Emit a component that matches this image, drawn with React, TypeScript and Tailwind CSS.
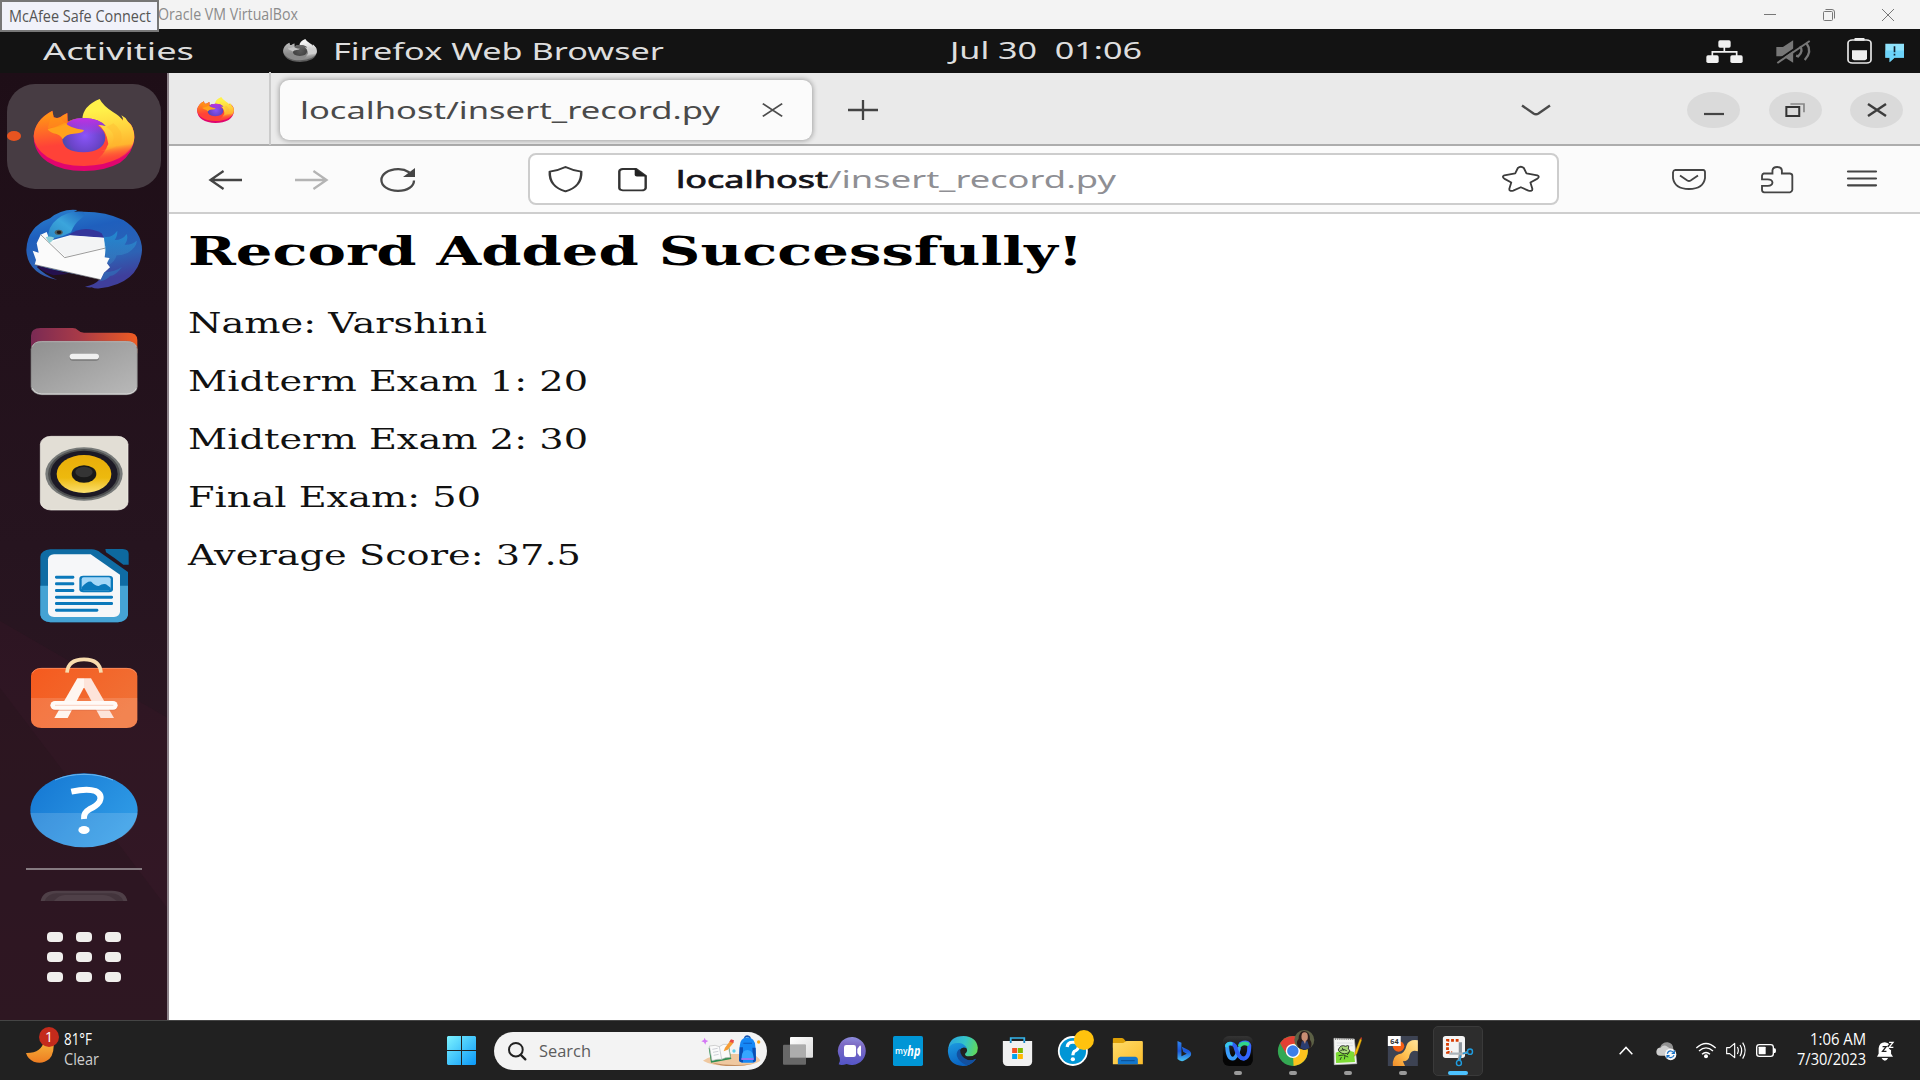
import React, { useLayoutEffect, useRef, useState } from "react";

/** Single line of text stretched horizontally to a fixed width. */
function Fit({ width, className = "", children }: { width: number; className?: string; children: React.ReactNode }) {
  const ref = useRef<HTMLSpanElement>(null);
  const [scale, setScale] = useState(1);
  useLayoutEffect(() => {
    if (ref.current && ref.current.offsetWidth) {
      setScale(width / ref.current.getBoundingClientRect().width);
    }
  }, [width]);
  return (
    <span className={`block shrink-0 whitespace-pre ${className}`} style={{ width }}>
      <span className="inline-block origin-left" ref={ref} style={{ transform: `scaleX(${scale})` }}>
        {children}
      </span>
    </span>
  );
}

function Art({ box, className, children }: { box: string; className: string; children: React.ReactNode }) {
  return (
    <svg viewBox={box} preserveAspectRatio="none" className={`block shrink-0 overflow-visible ${className}`} fill="none">
      {children}
    </svg>
  );
}

function FirefoxArt({ id, mono = false }: { id: string; mono?: boolean }) {
  const c = mono
    ? ["#b8b8b8", "#8a8a8a", "#5c5c5c", "#f4f4f4", "#cfcfcf", "#444444", "#6b6b6b", "#c4c4c4"]
    : ["#ff9416", "#ff4238", "#e0056e", "#fff14a", "#ffb52e", "#4c4bb0", "#b833e1", "#ffa21c"];
  return (
    <g>
      <defs>
        <linearGradient id={`${id}a`} gradientUnits="userSpaceOnUse" x1="215" y1="120" x2="235" y2="303">
          <stop offset="0.05" stopColor={c[0]} />
          <stop offset="0.55" stopColor={c[1]} />
          <stop offset="1" stopColor={c[1]} />
        </linearGradient>
        <linearGradient id={`${id}b`} gradientUnits="userSpaceOnUse" x1="300" y1="90" x2="325" y2="285">
          <stop offset="0.15" stopColor={c[3]} />
          <stop offset="0.5" stopColor={mono ? "#d0d0d0" : "#ffcf3c"} />
          <stop offset="0.72" stopColor={c[4]} />
          <stop offset="0.95" stopColor={c[1]} stopOpacity="0" />
        </linearGradient>
        <radialGradient id={`${id}c`} gradientUnits="userSpaceOnUse" cx="255" cy="196" r="66">
          <stop offset="0" stopColor={mono ? "#5a5a5a" : "#8a55fa"} />
          <stop offset="0.75" stopColor={mono ? "#474747" : "#6a44c8"} />
          <stop offset="1" stopColor={c[5]} />
        </radialGradient>
        <linearGradient id={`${id}d`} x1="0" y1="0" x2="0" y2="1">
          <stop offset="0.05" stopColor={c[6]} />
          <stop offset="0.5" stopColor={c[6]} stopOpacity="0" />
        </linearGradient>
      </defs>
      <path
        d="M157 122 L161 142 Q171 146 180 142 Q189 134 202 129 L203 155 Q225 144 250 145 Q330 140 381 152 Q403 168 403 205 Q400 250 360 278 Q315 303 252 303 Q185 303 142 275 Q102 247 101 200 Q104 150 157 122Z"
        fill={c[2]}
      />
      <path
        d="M157 122 L161 142 Q171 146 180 142 Q189 134 202 129 L203 155 Q225 144 250 145 Q330 140 381 152 Q403 168 403 200 Q400 238 358 264 Q315 287 252 288 Q185 288 142 261 Q102 235 101 198 Q104 150 157 122Z"
        fill={`url(#${id}a)`}
      />
      <path
        d="M247 148 Q248 108 299 87 Q309 107 340 127 Q360 138 369 153 Q369 142 364 136 Q376 141 384 155 Q403 170 403 203 Q401 245 350 272 Q310 288 275 280 Q310 262 325 222 Q320 180 290 160Z"
        fill={`url(#${id}b)`}
      />
      <path d="M318 172 Q352 190 336 222 Q322 240 300 244 Q346 240 364 214 Q372 184 340 160Z" fill={c[4]} opacity="0.35" />
      <path
        d="M201 160 Q218 144 254 144 Q298 146 317 168 Q303 164 292 166 Q316 182 316 203 Q313 245 250 247 Q188 245 187 206 Q190 188 203 180Z"
        fill={`url(#${id}c)`}
      />
      <path
        d="M201 160 Q218 144 254 144 Q298 146 317 168 Q303 164 292 166 Q316 182 316 203 Q313 245 250 247 Q188 245 187 206 Q190 188 203 180Z"
        fill={`url(#${id}d)`}
      />
      <path d="M143 177 Q168 172 196 158 Q206 173 252 180 Q250 190 221 191 Q198 192 188 208 Q181 193 160 190 Q146 184 143 177Z" fill={c[7]} />
      <path d="M157 122 L161 142 Q172 146 182 142 Q184 156 203 160 Q185 172 143 175 Q150 150 157 122Z" fill={c[0]} opacity="0.5" />
    </g>
  );
}

function Dock() {
  return (
    <aside className="relative flex w-[169px] shrink-0 flex-col items-center overflow-hidden border-r-2 border-[#8d838a] bg-linear-to-b from-[#1e0e17] via-[#26141f] to-[#321a26] pt-[24px] pl-px">
      <Art box="0 0 168 947" className="absolute inset-0 h-[947px] w-[168px]">
        <path d="M0 548 L168 645 V947 H0Z" fill="#3a1827" opacity="0.3" />
        <path d="M0 615 L168 836 V947 H0Z" fill="#26141c" opacity="0.35" />
      </Art>
      <div className="absolute top-[10.5px] left-[7px] h-[105.5px] w-[154px] rounded-[28px] bg-[#473c43]" />
      <div className="absolute top-[58px] left-[7px] h-[10px] w-[14px] rounded-[50%] bg-[#e95420]" />
      <div className="relative flex flex-col gap-[32px]">
        <Art box="78 81 348 240" className="h-[80px] w-[116px]">
          <FirefoxArt id="dock" />
        </Art>
        <Art box="78 417 348 240" className="h-[80px] w-[116px]">
          <defs>
            <linearGradient id="tb" x1="0" y1="0" x2="0.3" y2="1">
              <stop offset="0" stopColor="#2b84d0" />
              <stop offset="0.35" stopColor="#1f5fbd" />
              <stop offset="0.75" stopColor="#2d62b4" />
              <stop offset="1" stopColor="#3f3f9c" />
            </linearGradient>
            <linearGradient id="tbh" x1="0" y1="1" x2="1" y2="0">
              <stop offset="0" stopColor="#2c86c4" />
              <stop offset="0.5" stopColor="#3ba5dc" />
              <stop offset="1" stopColor="#1f66c0" />
            </linearGradient>
            <linearGradient id="tbf" x1="0" y1="0" x2="0" y2="1">
              <stop offset="0" stopColor="#1fa5e0" />
              <stop offset="1" stopColor="#3f8fc8" stopOpacity="0.5" />
            </linearGradient>
          </defs>
          <path d="M79 540 Q82 470 150 445 Q185 415 232 420 Q226 424 222 426 Q310 420 370 450 Q426 485 426 540 Q420 640 300 655 Q285 657 275 652 Q265 653 255 650 Q285 645 300 627 L110 590 Q130 612 172 630 Q82 612 79 540Z" fill="url(#tb)" />
          <path d="M108 585 Q125 606 160 616 L205 612Z" fill="#25104e" />
          <path d="M205 496 Q250 462 305 490 L312 504Z" fill="#33359a" />
          <path d="M122 494 L140 486 L150 512 L210 496 L312 503 L317 540 L314 562 L329 564 L321 580 L330 592 L312 608 L302 629 L104 584 L108 570 L98 542 L116 548 L110 520Z" fill="#fbfbfb" />
          <path d="M104 584 L302 629" stroke="#555" strokeWidth="3" opacity="0.6" />
          <path d="M196 560 L152 518 L210 497 L310 504 L316 531Z" fill="#f3f4f5" />
          <path d="M122 494 L194 563 L317 534" stroke="#9b9b9b" strokeWidth="3" />
          <path d="M144 508 Q142 470 172 447 Q205 420 248 425 Q262 432 242 446 Q222 462 213 487 Q190 500 165 504 Q155 508 144 508Z" fill="url(#tbh)" />
          <path d="M137 502 Q146 496 163 503 Q158 514 148 520Z" fill="#8fd0d8" />
          <ellipse cx="176" cy="487" rx="12" ry="8" fill="#4e5f60" />
          <ellipse cx="177" cy="487" rx="7" ry="5" fill="#231d1c" />
          <path d="M312 500 Q335 505 352 482 Q352 500 344 510 Q368 510 380 492 Q386 510 374 524 Q395 526 410 512 Q412 530 384 548 Q366 556 350 556 Q345 574 328 584 L322 575 L330 563 L316 562Z" fill="url(#tbf)" opacity="0.6" />
          <path d="M302 629 L314 606 Q345 606 366 590 Q350 615 330 618 Q322 630 300 634Z" fill="#2f74be" opacity="0.6" />
        </Art>
        <Art box="78 753 348 240" className="h-[80px] w-[116px]">
          <defs>
            <linearGradient id="fo" x1="0" y1="0" x2="1" y2="0">
              <stop offset="0" stopColor="#7a2a54" />
              <stop offset="0.45" stopColor="#a83a48" />
              <stop offset="1" stopColor="#ee5c22" />
            </linearGradient>
            <linearGradient id="fg" x1="0" y1="0" x2="1" y2="1">
              <stop offset="0" stopColor="#8f8f8f" />
              <stop offset="1" stopColor="#b9b9b9" />
            </linearGradient>
          </defs>
          <path d="M93 840 V797 Q93 774 122 774 H218 Q228 774 234 781 Q240 788 252 788 H385 Q412 788 412 810 V850Z" fill="url(#fo)" />
          <rect x="93" y="814" width="319" height="160" rx="32" ry="24" fill="url(#fg)" stroke="#777" strokeWidth="2" />
          <path d="M97 830 Q102 815 125 815 H380 Q404 815 409 830" stroke="#c8c8c8" strokeWidth="2" />
          <path d="M97 955 Q105 971 125 972 H380 Q402 971 409 955" stroke="#dadada" strokeWidth="3" />
          <rect x="209" y="854" width="88" height="18" rx="9" fill="#777" />
          <rect x="209" y="851" width="88" height="17" rx="9" fill="#f0f0f0" />
        </Art>
        <Art box="78 99 348 240" className="h-[80px] w-[116px]">
          <defs>
            <linearGradient id="rb" x1="0" y1="0" x2="0" y2="1">
              <stop offset="0" stopColor="#e9ad0a" />
              <stop offset="0.6" stopColor="#edb90e" />
              <stop offset="1" stopColor="#fbe070" />
            </linearGradient>
          </defs>
          <rect x="121" y="109" width="263" height="221" rx="32" ry="24" fill="#e2ded5" stroke="#f4f1ea" strokeWidth="2" />
          <ellipse cx="252" cy="222" rx="116" ry="80" fill="#777a79" />
          <ellipse cx="252" cy="222" rx="108" ry="75" fill="#4c4e4f" />
          <ellipse cx="252" cy="222" rx="101" ry="70" fill="#1c1925" />
          <ellipse cx="252" cy="222" rx="82" ry="57" fill="url(#rb)" />
          <ellipse cx="252" cy="222" rx="37" ry="26" fill="#191919" />
          <ellipse cx="252" cy="216" rx="26" ry="16" fill="#343434" />
        </Art>
        <Art box="78 435 348 240" className="h-[80px] w-[116px]">
          <path d="M151 448 H275 Q290 448 303 459 L384 516 V645 Q380 664 354 667 H151 Q124 664 121 645 V470 Q124 450 151 448Z" fill="#0f6ca4" />
          <path d="M121 557 H384 V645 Q380 664 354 667 H151 Q124 664 121 645Z" fill="#45a3d4" />
          <path d="M316 447 H368 Q386 448 386 461 V494 H370 Q344 474 318 457Z" fill="#0d699f" />
          <path d="M162 463 H272 L360 524 V636 Q358 650 342 651 H162 Q145 650 144 636 V478 Q145 465 162 463Z" fill="#f6f7f9" />
          <g fill="#0b79bb">
            <rect x="165" y="527" width="58" height="9" rx="4" />
            <rect x="165" y="547" width="58" height="9" rx="4" />
            <rect x="165" y="567" width="58" height="9" rx="4" />
            <rect x="165" y="587" width="174" height="9" rx="4" />
            <rect x="165" y="606" width="174" height="9" rx="4" />
            <rect x="165" y="626" width="130" height="9" rx="4" />
            <rect x="238" y="527" width="101" height="50" rx="12" ry="9" />
          </g>
          <rect x="245" y="532" width="87" height="39" rx="6" fill="#a5d8f8" />
          <path d="M245 562 Q262 542 274 545 Q286 558 296 558 Q308 550 318 553 L332 563 V571 H245Z" fill="#0b79bb" />
        </Art>
        <Art box="78 771 348 240" className="h-[80px] w-[116px]">
          <defs>
            <linearGradient id="sw" x1="0" y1="0" x2="1" y2="0.5">
              <stop offset="0" stopColor="#f55a1e" />
              <stop offset="1" stopColor="#f07035" />
            </linearGradient>
          </defs>
          <rect x="93" y="804" width="319" height="180" rx="32" ry="24" fill="url(#sw)" />
          <path d="M93 894 H412 V960 Q410 982 380 984 H125 Q95 982 93 960Z" fill="#fff" opacity="0.14" />
          <path d="M97 820 Q104 805 125 805 H380 Q402 806 409 820" stroke="#ff9b72" strokeWidth="2" />
          <path d="M201 818 Q204 778 252 778 Q300 778 303 818" stroke="#f8dcae" strokeWidth="11" />
          <path d="M232 835 H252 V862 L203 954 H163Z" fill="#fff6f0" />
          <path d="M252 835 H273 L342 954 H302 L252 862Z" fill="#fde4da" />
          <rect x="151" y="906" width="202" height="26" rx="14" fill="#d96a43" opacity="0.5" />
          <rect x="151" y="903" width="202" height="26" rx="14" fill="#fffaf7" />
          <path d="M165 916 H340" stroke="#fbd9cc" strokeWidth="4" />
        </Art>
        <Art box="78 147 348 240" className="h-[80px] w-[116px]">
          <defs>
            <linearGradient id="hp" x1="0" y1="0" x2="1" y2="0.6">
              <stop offset="0" stopColor="#1476d2" />
              <stop offset="1" stopColor="#2f9be6" />
            </linearGradient>
          </defs>
          <ellipse cx="252" cy="271" rx="161" ry="111" fill="url(#hp)" />
          <path d="M91 279 H413 Q408 325 366 350 Q315 382 252 382 Q190 382 138 350 Q95 322 91 279Z" fill="#fff" opacity="0.15" />
          <path d="M165 180 Q205 163 252 163 Q300 163 339 180" stroke="#7cc0f2" strokeWidth="2.5" />
          <path d="M214 215 Q262 204 286 213 Q308 224 299 244 Q290 258 268 268 Q250 278 252 297" stroke="#fff" strokeWidth="18" />
          <ellipse cx="252" cy="330" rx="17" ry="12" fill="#fff" />
        </Art>
      </div>
      <div className="relative mt-[19px] h-[2px] w-[116px] shrink-0 bg-[#857a80]" />
      <Art box="120 511 264 33" className="relative mt-[20px] h-[11px] w-[88px]">
        <path d="M122 544 Q128 513 168 513 H336 Q376 513 382 544Z" fill="#4f4048" />
        <path d="M134 544 Q144 521 170 521 H334 Q360 521 370 544Z" fill="#43343c" />
        <path d="M162 544 Q176 526 195 526 H310 Q330 526 350 544Z" fill="#4f4048" />
      </Art>
      <div className="relative mt-[31px] grid grid-cols-3 gap-x-[13px] gap-y-[10px]">
        {[0, 1, 2, 3, 4, 5, 6, 7, 8].map((i) => (
          <span key={i} className="h-[10px] w-[16px] rounded-[4px] bg-[#f0eeec]" />
        ))}
      </div>
    </aside>
  );
}

function TitleBar() {
  return (
    <div className="flex h-[29px] shrink-0 items-center bg-[#f3f3f3] text-[#8b8b8b]">
      <div className="relative z-10 mt-[3px] flex h-[32px] w-[159px] shrink-0 items-center border-2 border-[#777] bg-[#f1f2fa] pl-[7px] text-[#555]">
        <Fit width={142} className="text-[15.5px] leading-[30px]">McAfee Safe Connect</Fit>
      </div>
      <Fit width={140} className="-ml-px text-[15.5px] leading-[29px]">Oracle VM VirtualBox</Fit>
      <div className="mr-[26px] ml-auto flex items-center gap-[47px]">
        <Art box="0 0 12 12" className="h-[12px] w-[12px]"><path d="M0 5.5H12" stroke="#777" /></Art>
        <Art box="0 0 12 12" className="h-[12px] w-[12px]">
          <rect x="0.5" y="2.5" width="9" height="9" rx="1" stroke="#777" />
          <path d="M2.5 0.5 H9 Q11.5 0.5 11.5 3 V9.5" stroke="#777" />
        </Art>
        <Art box="0 0 12 12" className="h-[12px] w-[12px]"><path d="M0 0 L12 12 M12 0 L0 12" stroke="#777" /></Art>
      </div>
    </div>
  );
}

function TopBar() {
  return (
    <div className="flex h-[44px] shrink-0 items-center bg-[#131313] font-['Noto_Sans','Open_Sans',sans-serif] text-[23px] text-[#dedede]">
      <Fit width={151} className="ml-[43px] leading-[44px]">Activities</Fit>
      <Art box="100 87 304 217" className="ml-[89px] h-[24px] w-[34px] pb-px"><FirefoxArt id="top" mono /></Art>
      <Fit width={331} className="ml-[16px] leading-[44px]">Firefox Web Browser</Fit>
      <Fit width={192} className="ml-[286px] pb-[2px] leading-[42px]">{"Jul 30  01:06"}</Fit>
      <div className="mr-[16px] ml-auto flex items-center">
        <Art box="918 115 111 68" className="h-[23px] w-[37px]">
          <path d="M973 135V150M937 165V150H1010V165" stroke="#f0f0f0" strokeWidth="5" />
          <rect x="955" y="116" width="37" height="22" rx="5" fill="#f0f0f0" />
          <rect x="919" y="160" width="37" height="23" rx="5" fill="#f0f0f0" />
          <rect x="991" y="160" width="37" height="23" rx="5" fill="#f0f0f0" />
        </Art>
        <Art box="1127 117 103 69" className="ml-[33px] h-[23px] w-[34px]">
          <path d="M1128 138H1148L1179 118V185L1148 166H1128Z" fill="#777" />
          <path d="M1199 135Q1212 150 1194 166L1188 164M1219 126Q1238 152 1214 177" stroke="#777" strokeWidth="7" />
          <path d="M1130 180L1222 117" stroke="#131313" strokeWidth="6" />
          <path d="M1131 186L1229 120" stroke="#777" strokeWidth="6" />
        </Art>
        <Art box="1343 111 75 77" className="ml-[37px] h-[26px] w-[25px]">
          <rect x="1365" y="111" width="31" height="8" rx="3" fill="#f0f0f0" />
          <rect x="1346" y="117" width="69" height="68" rx="13" ry="9" stroke="#e8e8e8" strokeWidth="5" />
          <path d="M1358 147H1403V172Q1402 176 1397 177H1364Q1359 176 1358 172Z" fill="#f0f0f0" />
        </Art>
        <Art box="1455 127 58 58" className="mt-[3px] ml-[13px] h-[19px] w-[19px]">
          <path d="M1456 129H1513V172H1484L1469 186V172H1456Z" fill="#8fe2fb" />
          <path d="M1456 150H1513V172H1484L1469 186V172H1456Z" fill="#5ccdf8" opacity=".7" />
          <path d="M1484 137V155M1484 160V165" stroke="#123" strokeWidth="5" />
        </Art>
      </div>
    </div>
  );
}

function WindowButton({ children }: { children: React.ReactNode }) {
  return <div className="flex h-[36px] w-[53px] items-center justify-center rounded-[50%] bg-[#dadada]">{children}</div>;
}

function TabStrip() {
  return (
    <div className="flex h-[73px] shrink-0 items-center border-b-2 border-[#adadad] bg-[#eaeaea] pt-[2px]">
      <div className="-mt-[2px] flex h-[73px] w-[102px] shrink-0 items-center justify-center border-r-2 border-[#cbcbcb] pt-[2px]">
        <Art box="100 87 304 217" className="ml-[-7px] h-[26px] w-[37px]"><FirefoxArt id="tab" /></Art>
      </div>
      <div className="ml-[9px] flex h-[60px] w-[532px] shrink-0 items-center rounded-[9px] bg-[#fbfbfb] pl-[20px] text-[#4a4a4a] shadow-[0_0_5px_1px_rgba(0,0,0,0.3)]">
        <Fit width={420} className="font-['Noto_Sans','Open_Sans',sans-serif] text-[24px] leading-[60px]">localhost/insert_record.py</Fit>
        <Art box="159 309 51 42" className="ml-[42px] h-[14px] w-[21px]">
          <path d="M161 311L208 349M208 311L161 349" stroke="#4c4c4c" strokeWidth="4.5" />
        </Art>
      </div>
      <Art box="0 0 30 20" className="ml-[36px] h-[20px] w-[30px]"><path d="M0 10H30M15 0V20" stroke="#444" strokeWidth="2.3" /></Art>
      <Art box="0 0 30 12" className="ml-[643px] h-[12px] w-[30px]">
        <path d="M1 1.5L12.5 9.5Q15 11 17.5 9.5L29 1.5" stroke="#4a4a4a" strokeWidth="2.4" />
      </Art>
      <div className="mr-[17px] ml-auto flex gap-[28.5px]">
        <WindowButton><Art box="0 0 20 12" className="h-[12px] w-[20px]"><path d="M0 10H20" stroke="#444" strokeWidth="2.2" /></Art></WindowButton>
        <WindowButton>
          <Art box="1156 309 59 42" className="h-[14px] w-[20px]">
            <rect x="1160" y="321" width="38" height="27" stroke="#333" strokeWidth="6" />
            <path d="M1172 312H1212V337" stroke="#888" strokeWidth="5" />
          </Art>
        </WindowButton>
        <WindowButton><Art box="0 0 20 14" className="h-[14px] w-[20px]"><path d="M1 1L19 13M19 1L1 13" stroke="#3c3c3c" strokeWidth="2.4" /></Art></WindowButton>
      </div>
    </div>
  );
}

function NavBar() {
  return (
    <div className="flex h-[68px] shrink-0 items-center border-b-2 border-[#cecece] bg-[#fbfbfb] text-[#444]">
      <Art box="0 0 34 20" className="mt-[2px] ml-[40px] h-[20px] w-[33px]"><path d="M34 10H2M15 1L1.5 10L15 19" stroke="#444" strokeWidth="2.3" /></Art>
      <Art box="0 0 34 20" className="mt-[2px] ml-[53px] h-[20px] w-[33px]"><path d="M0 10H32M19 1L32.5 10L19 19" stroke="#b4b4b4" strokeWidth="2.3" /></Art>
      <Art box="0 0 36 24" className="mt-[2px] ml-[52px] h-[24px] w-[36px]">
        <path d="M29.5 4.5Q24 1 18 1.2C8 1.500 1.400 6 1.400 12S8 22.800 18 22.800S34 18 34 12.500" stroke="#4a4a4a" strokeWidth="2.300" />
        <path d="M35 0V9H23Z" fill="#444" />
      </Art>
      <div className="ml-[112px] flex h-[52px] w-[1031px] shrink-0 items-center rounded-[8px] border-2 border-[#cdcdcd] bg-white">
        <Art box="1230 498 78 79" className="ml-[18px] h-[26px] w-[35px]">
          <path d="M1269 501Q1286 512 1304 515Q1306 560 1269 575Q1232 560 1234 515Q1252 512 1269 501Z" stroke="#3a3a3a" strokeWidth="5.500" strokeLinejoin="round" />
        </Art>
        <Art box="1387 503 66 70" className="ml-[35px] h-[23px] w-[29px]">
          <path d="M1398 506H1428L1450 527V564Q1449 571 1440 571H1398Q1390 570 1390 564V513Q1391 507 1398 506Z" stroke="#333" strokeWidth="5.500" />
          <path d="M1425 504L1452 529H1430Q1425 528 1425 524Z" fill="#222" />
        </Art>
        <div className="ml-[29px] flex font-['Noto_Sans','Open_Sans',sans-serif] text-[24px] leading-[50px]">
          <Fit width={152} className="text-[#15141a] [-webkit-text-stroke:0.7px_#15141a]">localhost</Fit>
          <Fit width={288} className="text-[#8f8f94]">/insert_record.py</Fit>
        </div>
        <Art box="308 500 115 77" className="mr-[17px] ml-auto h-[26px] w-[38px]">
          <path d="M356 506Q365 498 374 506L382 522L415 528Q424 532 414 538L394 549L400 568Q400 576 388 573L365 563L342 573Q330 576 330 568L336 549L316 538Q306 532 315 528L348 522Z" stroke="#3c3c3c" strokeWidth="5.500" strokeLinejoin="round" />
        </Art>
      </div>
      <div className="mr-[43px] ml-auto flex items-center">
        <Art box="818 507 102 64" className="h-[21px] w-[34px]">
          <path d="M828 510H911Q917 511 917 517V535Q912 568 869 568Q826 568 821 535V517Q822 511 828 510Z" stroke="#444" strokeWidth="5.500" />
          <path d="M842 527L864 542Q869 545 874 542L896 527" stroke="#444" strokeWidth="5.500" />
        </Art>
        <Art box="1084 498 95 79" className="ml-[55px] h-[27px] w-[32px]">
          <path d="M1092 520H1118V511Q1119 501 1132 501Q1145 501 1146 511V520H1170Q1177 521 1177 527V568Q1176 574 1170 575H1094Q1087 574 1087 568V556H1104Q1118 555 1118 546Q1117 537 1104 537H1087V526Q1088 521 1092 520Z" stroke="#444" strokeWidth="5.500" />
        </Art>
        <Art box="0 0 30 17" className="-mt-[1px] ml-[54px] h-[17px] w-[30px]">
          <path d="M1 1.500H29M1 8.500H29M1 15.300H29" stroke="#444" strokeWidth="2.200" strokeLinecap="round" />
        </Art>
      </div>
    </div>
  );
}

function RecordPage() {
  const rows: [string, number][] = [
    ["Name: Varshini", 299],
    ["Midterm Exam 1: 20", 400],
    ["Midterm Exam 2: 30", 400],
    ["Final Exam: 50", 293],
    ["Average Score: 37.5", 393],
  ];
  return (
    <main className="flex flex-1 flex-col bg-white pt-[12px] pl-[19px] font-['DejaVu_Serif',serif] text-[#111]">
      <h2 className="mb-[19px] font-bold text-black">
        <Fit width={895} className="text-[40px] leading-[50px]">Record Added Successfully!</Fit>
      </h2>
      {rows.map(([text, w]) => (
        <Fit key={text} width={w} className="h-[58px] text-[28px] leading-[58px]">{text}</Fit>
      ))}
    </main>
  );
}

function Slot({ running = false, active = false, children }: { running?: boolean; active?: boolean; children: React.ReactNode }) {
  return (
    <div className="flex w-[55px] justify-center">
      <div className={active ? "relative flex h-[50px] w-[50px] items-center justify-center rounded-[5px] border border-[#3a3a3a] bg-[#2d2d2d]" : "relative flex h-[50px] w-[50px] items-center justify-center"}>
        {children}
        {active && <span className="absolute bottom-0 h-[4px] w-[20px] rounded-full bg-[#4cc2ff]" />}
        {running && <span className="absolute bottom-[1px] h-[4px] w-[8px] rounded-full bg-[#9a9a9a]" />}
      </div>
    </div>
  );
}

const icon = "h-[30px] w-[30px]";

function TaskbarApps() {
  return (
    <div className="ml-[3.5px] flex shrink-0">
      <Slot>
        <Art box="1089 75 90 90" className={icon}>
          <defs><linearGradient id="tv" x1="0" y1="0" x2="1" y2="1"><stop stopColor="#fff" /><stop offset="1" stopColor="#dcdcdc" /></linearGradient></defs>
          <rect x="1110" y="78" width="69" height="62" rx="3" fill="url(#tv)" />
          <rect x="1089" y="101" width="69" height="60" rx="3" fill="#686868" />
          <rect x="1110" y="101" width="48" height="39" fill="#adadad" />
        </Art>
      </Slot>
      <Slot>
        <Art box="1254 75 90 90" className={icon}>
          <defs><linearGradient id="ch" x1="0.7" y1="0" x2="0.6" y2="1"><stop stopColor="#8e8fdf" /><stop offset="0.3" stopColor="#7d6bc4" /><stop offset="1" stopColor="#5556c8" /></linearGradient></defs>
          <path d="M1298 78A42 42 0 1 1 1280 159Q1265 164 1256 160Q1262 150 1259 140A42 42 0 0 1 1298 78Z" fill="url(#ch)" />
          <rect x="1272" y="102" width="36" height="36" rx="7" fill="#fff" />
          <path d="M1312 114L1319 104Q1323 103 1323 108V132Q1323 137 1319 136L1312 126Z" fill="#fff" />
        </Art>
      </Slot>
      <Slot>
        <Art box="1419 75 90 90" className={icon}>
          <rect x="1419" y="75" width="90" height="90" rx="5" fill="#0096d6" />
          <text x="1425" y="130" fill="#fff" fontSize="27" fontWeight="600" textLength="37" lengthAdjust="spacingAndGlyphs" fontFamily="Open Sans, sans-serif">my</text>
          <text x="1462" y="134" fill="#fff" fontSize="43" fontWeight="700" fontStyle="italic" textLength="39" lengthAdjust="spacingAndGlyphs" fontFamily="Open Sans, sans-serif">hp</text>
        </Art>
      </Slot>
      <Slot>
        <Art box="50.4 75 84 90" className={icon}>
          <defs>
            <linearGradient id="e1" x1="0" y1="0.3" x2="1" y2="0.5"><stop stopColor="#2aa5e0" /><stop offset="0.55" stopColor="#35c5c8" /><stop offset="1" stopColor="#60d85c" /></linearGradient>
            <linearGradient id="e2" x1="0" y1="0" x2="0.4" y2="1"><stop stopColor="#1c9be0" /><stop offset="1" stopColor="#0a63c2" /></linearGradient>
          </defs>
          <path d="M51 112Q56 75 94 75Q130 77 134 110Q134 136 108 136Q98 136 98 129Q104 125 104 118Q103 105 88 104Q70 98 51 112Z" fill="url(#e1)" />
          <path d="M51 112Q60 94 82 96Q97 98 103 112Q90 105 83 118Q80 140 104 148Q118 150 129 143Q115 165 92 165Q52 163 50 120Z" fill="url(#e2)" />
          <path d="M84 113Q73 120 75 134Q80 152 102 163Q120 159 129 144Q118 149 106 147Q84 138 84 113Z" fill="#13509f" />
        </Art>
      </Slot>
      <Slot>
        <Art box="204.4 75 84 90" className={icon}>
          <path d="M226 97V81H264V97" stroke="#35b5ec" strokeWidth="5" />
          <path d="M204 90H286V152Q285 164 273 165H217Q205 164 204 152Z" fill="#f0f0f0" />
          <path d="M226 90V96M264 90V96" stroke="#1785c0" strokeWidth="5" />
          <rect x="230" y="111" width="14" height="15" fill="#f25022" /><rect x="246" y="111" width="14" height="15" fill="#7fba00" />
          <rect x="230" y="129" width="14" height="15" fill="#00a4ef" /><rect x="246" y="129" width="14" height="15" fill="#ffb900" />
        </Art>
      </Slot>
      <Slot>
        <Art box="358.4 75 84 90" className={icon}>
          <ellipse cx="400" cy="120" rx="42" ry="45" fill="#fff" />
          <ellipse cx="400" cy="120" rx="37" ry="39" fill="#0096d6" />
          <path d="M384 108Q386 93 401 94Q417 95 416 108Q414 117 404 121Q400 125 400 133" stroke="#fff" strokeWidth="9" />
          <ellipse cx="400" cy="145" rx="6" ry="6" fill="#fff" />
          <ellipse cx="431" cy="87" rx="28" ry="30" fill="#ffc20e" />
        </Art>
      </Slot>
      <Slot>
        <Art box="512.4 75 84 90" className={icon}>
          <defs><linearGradient id="fx" x1="0" y1="0" x2="1" y2="1"><stop stopColor="#ffdb69" /><stop offset="1" stopColor="#fbbd2c" /></linearGradient></defs>
          <path d="M512 84Q512 81 515 81H537Q540 81 543 84L549 92V110H512Z" fill="#dea007" />
          <path d="M512 96H541L550 90H593Q596 90 596 94V160H512Z" fill="url(#fx)" />
          <path d="M526 160V144Q527 138 533 137H575Q581 138 582 144V160Z" fill="#1376cc" />
          <path d="M535 149H573" stroke="#0b4e91" strokeWidth="3" />
        </Art>
      </Slot>
      <Slot>
        <Art box="666.4 75 84 90" className={icon}>
          <defs><linearGradient id="bi" x1="0" y1="0" x2="0" y2="1"><stop stopColor="#2f85ee" /><stop offset="0.5" stopColor="#1b55d8" /><stop offset="1" stopColor="#47c3f4" /></linearGradient></defs>
          <path d="M693 90L704 95V136L719 128L709 122L705 107L725 118Q734 125 730 134Q727 139 709 150Q700 152 693 144Z" fill="url(#bi)" />
        </Art>
      </Slot>
      <Slot running>
        <Art box="820.4 75 84 90" className={icon}>
          <defs><linearGradient id="wx" x1="0" y1="0" x2="0" y2="1"><stop stopColor="#343434" /><stop offset="0.7" stopColor="#050505" /></linearGradient></defs>
          <rect x="820" y="75" width="84" height="90" rx="17" fill="url(#wx)" />
          <path d="M870 98Q890 88 894 104Q894 142 877 143Q866 143 860 120" stroke="#3566ff" strokeWidth="11" strokeLinecap="round" />
          <path d="M868 103Q878 94 889 99" stroke="#30d58b" strokeWidth="11" strokeLinecap="round" />
          <path d="M832 103Q833 144 848 143Q858 142 865 112" stroke="#3b9dfb" strokeWidth="11" strokeLinecap="round" />
          <path d="M832 103Q843 92 854 105Q863 141 878 143" stroke="#2d5ff2" strokeWidth="11" strokeLinecap="round" />
          <path d="M831 105Q834 95 843 98" stroke="#38c8e8" strokeWidth="10" strokeLinecap="round" />
        </Art>
      </Slot>
      <Slot running>
        <Art box="974.4 75 84 90" className={icon}>
          <ellipse cx="1016" cy="120" rx="42" ry="45" fill="#34a853" />
          <path d="M1016 120L980 97Q990 77 1016 75Q1042 77 1054 98Z" fill="#e53f33" />
          <path d="M1016 120V98H1052Q1058 108 1058 120Q1056 158 1018 165Z" fill="#fcc31e" />
          <path d="M980 97L999 131L1016 120Z" fill="#e53f33" />
          <ellipse cx="1016" cy="120" rx="20" ry="21" fill="#fff" />
          <ellipse cx="1016" cy="120" rx="16" ry="17" fill="#3c7fe8" />
          <ellipse cx="1048" cy="87" rx="28" ry="30" fill="#5c6045" />
          <path d="M1033 111Q1022 95 1032 84Q1033 61 1047 60Q1065 62 1064 86Q1072 98 1065 111L1048 117Z" fill="#281d1c" />
          <ellipse cx="1049" cy="77" rx="9" ry="13" fill="#c88e73" />
          <path d="M1041 91H1057L1063 110L1049 116L1037 110Z" fill="#2b3d70" />
          <path d="M1045 88H1053L1050 99Z" fill="#c88e73" />
        </Art>
      </Slot>
      <Slot running>
        <Art box="1128.4 75 84 90" className={icon}>
          <path d="M1131 82L1188 84L1195 158L1132 161Z" fill="#f4f5f2" stroke="#bdbdbd" strokeWidth="2" />
          <path d="M1134 84H1186" stroke="#777" strokeWidth="4" strokeDasharray="3 3" />
          <path d="M1139 96H1183M1139 104H1184" stroke="#cfd3d8" strokeWidth="2" />
          <path d="M1136 125Q1160 112 1187 123L1190 153L1137 156Z" fill="#7ddc35" />
          <path d="M1143 117Q1149 99 1164 106Q1176 99 1171 114Q1181 119 1168 127Q1152 132 1143 117Z" fill="#a8d878" stroke="#222" strokeWidth="2.5" />
          <path d="M1149 119Q1159 112 1167 119M1154 110L1158 119M1144 134Q1159 128 1171 138M1152 138L1148 147M1162 135L1160 145M1174 124L1168 132" stroke="#20301d" strokeWidth="2.5" />
          <path d="M1188 136L1190 122L1204 83L1209 86L1196 127Z" fill="#f2b90c" stroke="#7c5a0a" strokeWidth="1" />
          <path d="M1204 83L1207 78L1210 81L1209 86Z" fill="#b13826" />
        </Art>
      </Slot>
      <Slot running>
        <Art box="1282.4 75 84 90" className={icon}>
          <defs><linearGradient id="pt" x1="0" y1="1" x2="1" y2="0"><stop stopColor="#f18d28" /><stop offset="0.5" stopColor="#ffc455" /><stop offset="1" stopColor="#ffe49b" /></linearGradient></defs>
          <rect x="1282" y="75" width="84" height="90" fill="#3d4353" />
          <ellipse cx="1312" cy="106" rx="16" ry="16" fill="#f65f13" />
          <path d="M1296 165Q1294 137 1312 130Q1330 126 1334 104Q1341 84 1366 88V121Q1349 115 1343 131Q1341 150 1324 151L1330 165Z" fill="url(#pt)" />
          <rect x="1282" y="75" width="36" height="30" fill="#fff" />
          <text x="1289" y="98" fontSize="21" fontWeight="700" fill="#333" textLength="23" lengthAdjust="spacingAndGlyphs" fontFamily="Noto Sans, sans-serif">64</text>
        </Art>
      </Slot>
      <Slot active>
        <Art box="1436.4 75 84 90" className={icon}>
          <rect x="1436" y="75" width="62" height="66" rx="8" fill="#f4f4f4" />
          <path d="M1480 88H1449V124H1462" stroke="#d83b01" strokeWidth="8" strokeDasharray="8 5" />
          <path d="M1485 94V130Q1484 140 1481 148" stroke="#8f979f" strokeWidth="9" />
          <path d="M1454 128H1490L1505 124" stroke="#abb3b9" strokeWidth="7" />
          <ellipse cx="1512" cy="122" rx="7" ry="8" stroke="#1f9de0" strokeWidth="4" />
          <ellipse cx="1481" cy="156" rx="7" ry="8" stroke="#1f9de0" strokeWidth="4" />
          <path d="M1483 148L1486 134M1492 128L1504 124" stroke="#1f9de0" strokeWidth="4" />
        </Art>
      </Slot>
    </div>
  );
}

function Taskbar() {
  return (
    <footer className="flex h-[60px] shrink-0 items-center border-t border-[#454545] bg-[#212121] text-[15.5px] leading-[20px] text-white">
      <div className="relative ml-[26px] h-full w-[34px] shrink-0">
        <Art box="79 975 83 54" className="absolute top-[24px] left-0 h-[18px] w-[28px]">
          <defs><linearGradient id="mo" x1="0" y1="0" x2="0" y2="1"><stop stopColor="#f6b73c" /><stop offset="1" stopColor="#ee7d22" /></linearGradient></defs>
          <path d="M79 999Q126 1000 133 960H160Q165 1000 148 1017Q128 1034 102 1025Q84 1017 79 999Z" fill="url(#mo)" />
        </Art>
        <span className="absolute top-[6px] left-[13px] flex h-[20px] w-[20px] items-center justify-center rounded-full bg-[#c42b1c] text-[14px]">1</span>
      </div>
      <div className="ml-[4px] w-[40px] shrink-0 pb-[3px]">
        <Fit width={28}>81°F</Fit>
        <Fit width={35} className="text-[#cfcfcf]">Clear</Fit>
      </div>
      <Art box="81 78 87 87" className="ml-[343px] h-[29px] w-[29px]">
        <defs><linearGradient id="win" gradientUnits="userSpaceOnUse" x1="81" y1="78" x2="168" y2="165"><stop stopColor="#7df3ff" /><stop offset="1" stopColor="#0a98f8" /></linearGradient></defs>
        <path d="M84 78H123V120H81V81ZM126 78H165L168 81V120H126ZM81 123H123V165H84L81 162ZM126 123H168V162L165 165H126Z" fill="url(#win)" />
      </Art>
      <div className="ml-[18px] flex h-[38px] w-[273px] shrink-0 items-center rounded-full bg-[#f3f3f3] text-[#5c5c5c]">
        <Art box="264 92 55 56" className="ml-[14px] h-[18px] w-[18px]">
          <circle cx="288" cy="116" r="21" stroke="#222" strokeWidth="6" />
          <path d="M303 132L317 146" stroke="#222" strokeWidth="7" strokeLinecap="round" />
        </Art>
        <Fit width={52} className="ml-[13px] text-[17px] leading-[34px]">Search</Fit>
        <Art box="843 78 180 96" className="ml-[110px] h-[32px] w-[60px]">
          <path d="M849 155Q880 134 940 135H1000Q1018 147 1021 155Q1000 171 935 171Q875 171 849 155Z" fill="#efc8a0" />
          <path d="M876 161Q935 174 1000 164Q970 172 935 171Q900 171 876 161Z" fill="#c08b5d" />
          <path d="M854 86L857 93L865 96L858 100L856 107L852 100L844 97L851 93Z" fill="#d477f5" />
          <path d="M866 116L873 161L934 150L927 112Z" fill="#2f8f51" />
          <path d="M868 111Q888 106 898 113Q908 103 924 106L931 145Q914 145 905 151Q892 149 876 155Z" fill="#fafafa" stroke="#bbb" strokeWidth="2" />
          <path d="M898 113L905 151M877 121L893 118M879 130L895 127M881 139L896 136" stroke="#b6bac3" strokeWidth="2" />
          <path d="M911 127L915 116L932 94L941 101L923 122Z" fill="#f59d36" />
          <path d="M928 98L933 91L942 94L940 102Z" fill="#e74848" />
          <circle cx="942" cy="126" r="5" fill="#5fcdea" /><circle cx="1016" cy="99" r="5" fill="#f7a51c" />
          <path d="M973 92Q974 81 982 81Q991 82 991 92" stroke="#1653ad" strokeWidth="4" />
          <path d="M959 112Q960 86 982 85Q1005 87 1006 112L1008 153Q1007 161 998 161H967Q957 160 957 153Z" fill="#1688f5" />
          <path d="M959 115H969V160Q957 160 957 153ZM997 116H1007L1008 153Q1007 160 999 160Z" fill="#0b4eb3" />
          <path d="M965 145Q965 123 983 123Q1000 125 1001 145V153H965Z" fill="#35a6ff" />
          <path d="M964 150H1001" stroke="#b06af2" strokeWidth="5" />
          <path d="M970 103H996" stroke="#0f65cf" strokeWidth="4" />
        </Art>
      </div>
      <TaskbarApps />
      <div className="mr-[26px] ml-auto flex items-center">
        <Art box="117 107 42 26" className="h-[9px] w-[14px]"><path d="M119 131L138 111L157 131" stroke="#fff" strokeWidth="4.500" /></Art>
        <Art box="227 98 60 52" className="ml-[23px] h-[18px] w-[20px]">
          <path d="M240 112Q246 98 262 99Q278 101 279 118L260 130Z" fill="#919191" />
          <path d="M240 138Q228 137 228 126Q229 114 242 113Q248 106 257 109L272 119L258 138Z" fill="#cecece" />
          <circle cx="271" cy="134" r="17" fill="#f8f8f8" />
          <path d="M261 132Q264 123 272 124Q278 125 281 130M281 136Q278 144 270 143Q264 142 261 137M282 122V131H274M260 145V137H268" stroke="#1671c7" strokeWidth="3.500" />
        </Art>
        <Art box="348 96 60 45" className="ml-[20px] h-[15px] w-[20px]">
          <path d="M349 111Q378 84 407 111M357 120Q378 101 399 120M366 130Q378 119 390 130" stroke="#fff" strokeWidth="4" />
          <circle cx="378" cy="136" r="6" fill="#fff" />
        </Art>
        <Art box="438 95 60 51" className="ml-[10px] h-[17px] w-[20px]">
          <path d="M440 112H449L464 99V142L449 130H440Z" stroke="#fff" strokeWidth="3.500" strokeLinejoin="round" />
          <path d="M472 110Q478 120 472 131M480 104Q490 120 480 138M488 97Q503 120 488 145" stroke="#fff" strokeWidth="3.500" />
        </Art>
        <Art box="528 101 60 39" className="ml-[10px] h-[13px] w-[20px]">
          <rect x="530" y="103" width="50" height="35" rx="8" stroke="#fff" strokeWidth="4" />
          <rect x="536" y="109" width="21" height="23" rx="2" fill="#fff" />
          <path d="M581 114H585Q588 115 588 121Q588 127 585 128H581Z" fill="#fff" />
        </Art>
        <div className="ml-[21px] flex w-[69px] flex-col items-end pb-[3px]">
          <Fit width={56}>1:06 AM</Fit>
          <Fit width={69}>7/30/2023</Fit>
        </div>
        <Art box="891 92 52 60" className="ml-[11px] h-[20px] w-[17px]">
          <path d="M891 139L896 130V114Q898 96 915 96Q933 99 934 114V130L940 139Z" fill="#fff" />
          <path d="M905 143H925Q921 151 915 151Q908 150 905 143Z" fill="#fff" />
          <path d="M908 109H919L908 123H920" stroke="#212121" strokeWidth="4" />
          <path d="M922 108L936 92L944 110L932 119Z" fill="#212121" />
          <path d="M928 96H940L928 111H941" stroke="#fff" strokeWidth="4" />
        </Art>
      </div>
    </footer>
  );
}

export default function App() {
  return (
    <div className="flex h-[1080px] w-[1920px] flex-col overflow-hidden bg-white font-['Open_Sans','Noto_Sans',sans-serif]">
      <TitleBar />
      <TopBar />
      <div className="flex min-h-0 flex-1">
        <Dock />
        <div className="flex min-w-0 flex-1 flex-col">
          <TabStrip />
          <NavBar />
          <RecordPage />
        </div>
      </div>
      <Taskbar />
    </div>
  );
}
